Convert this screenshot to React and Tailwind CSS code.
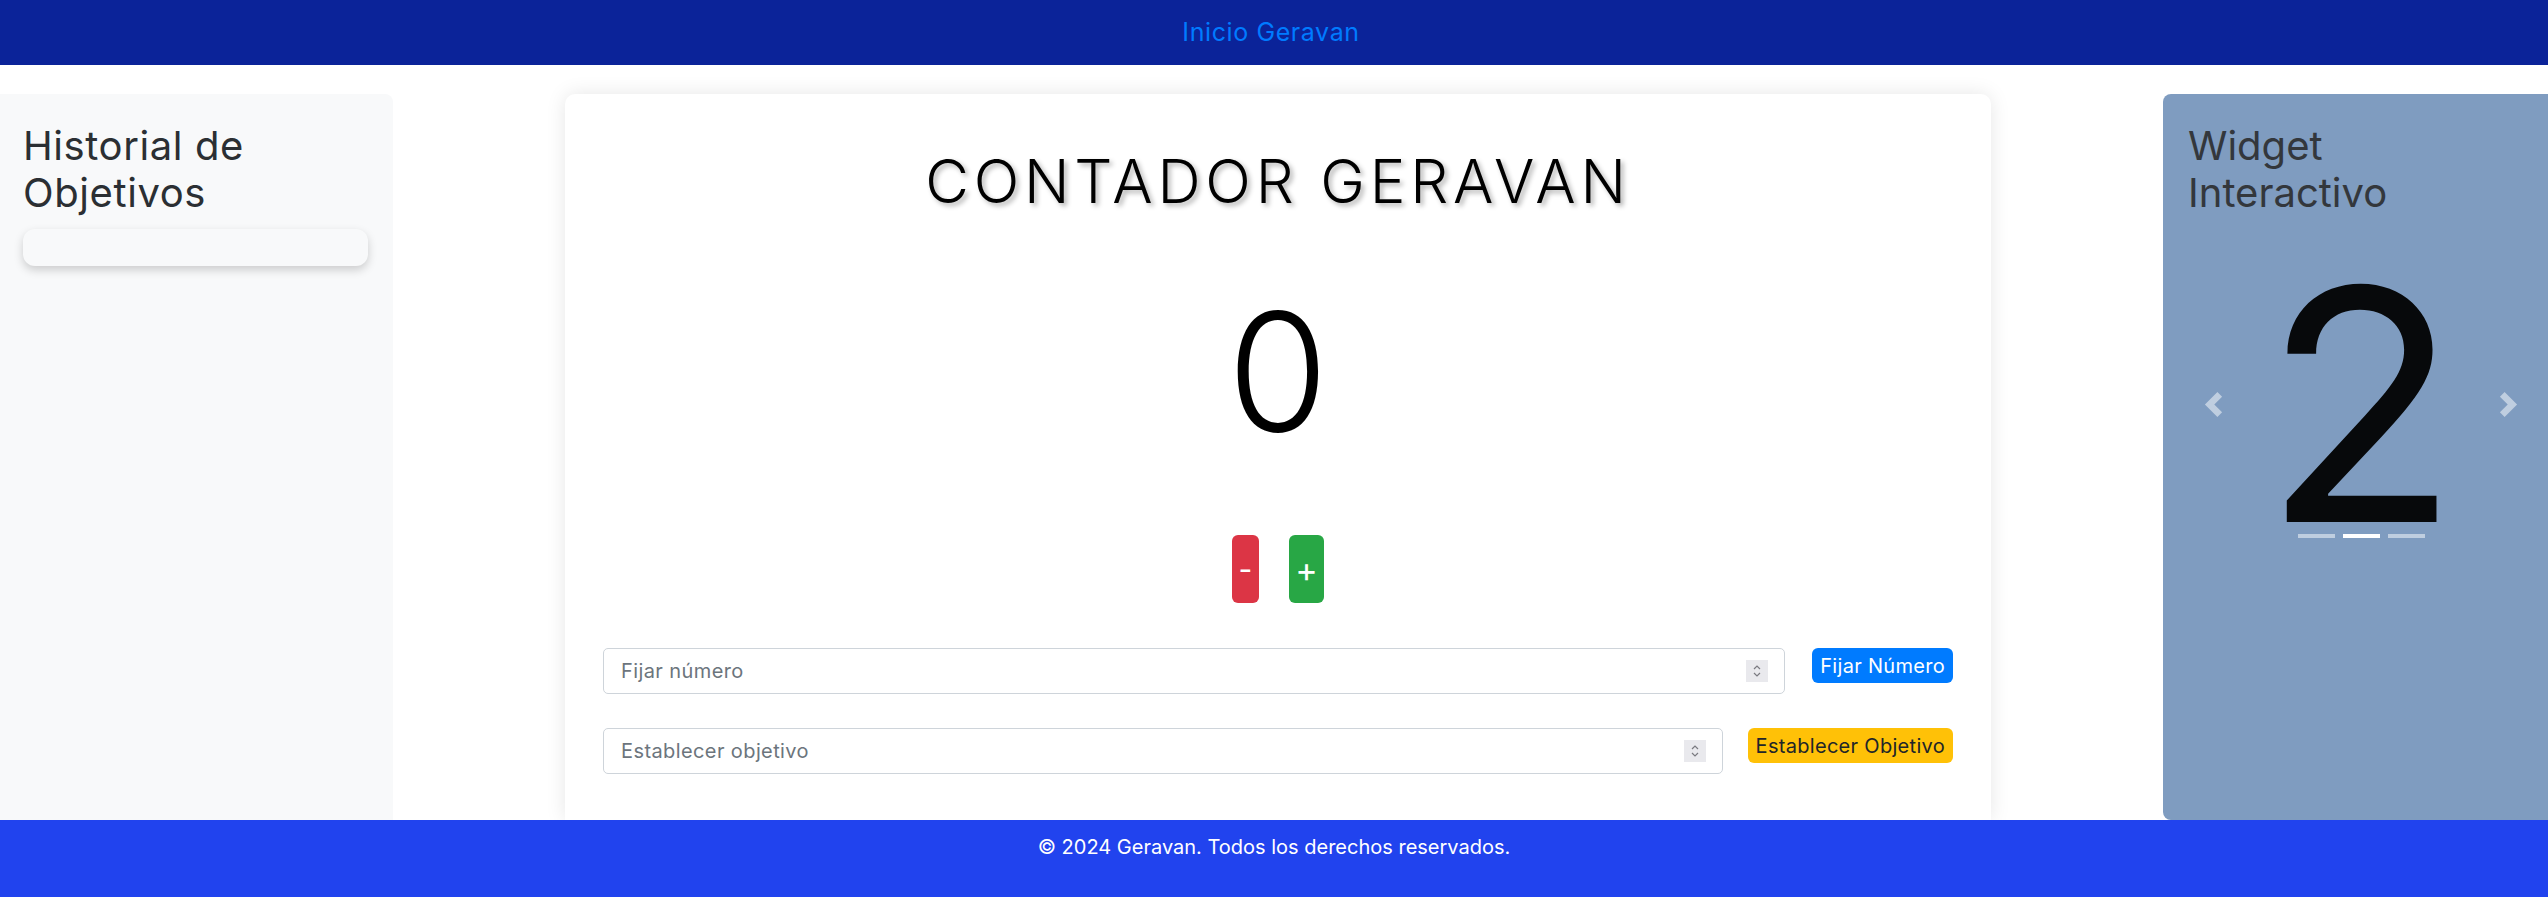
const font = "font-['Inter','Liberation_Sans',sans-serif]"

function Spinner() {
    return (
        <span className="flex h-[22px] w-[22px] flex-col items-center justify-center bg-[#e9e9ed]">
            <svg viewBox="0 0 10 14" className="h-[14px] w-[10px]" fill="none" stroke="#7a7a80" strokeWidth="1.2">
                <path d="M2 5 L5 2 L8 5" />
                <path d="M2 9 L5 12 L8 9" />
            </svg>
        </span>
    )
}

function NumberField({ placeholder }) {
    return (
        <div className="flex h-[46px] flex-1 items-center justify-between rounded-[5px] border border-[#ced4da] bg-white pl-[17px] pr-[16px]">
            <span className="text-[20px] tracking-[0.4px] text-[#6c757d]">{placeholder}</span>
            <Spinner />
        </div>
    )
}

function CarouselArrow({ flip }) {
    return (
        <svg viewBox="0 0 8 8" className={`h-[25px] w-[25px] ${flip ? 'rotate-180' : ''}`}>
            <path d="M5.25 0l-4 4 4 4 1.5-1.5L4.25 4l2.5-2.5L5.25 0z" fill="rgba(255,255,255,0.5)" />
        </svg>
    )
}

export default function App() {
    return (
        <div className={`${font} flex h-[897px] w-[2548px] flex-col overflow-hidden bg-white`}>
            {/* Navbar */}
            <header className="flex h-[65px] shrink-0 items-center justify-center bg-[#0b2399]">
                <a className="pr-[6px] text-[25px] tracking-[0.6px] text-[#007bff]">Inicio Geravan</a>
            </header>

            {/* Main */}
            <main className="flex flex-1 justify-between pt-[29px]">
                {/* Historial */}
                <aside className="w-[393px] rounded-tr-[8px] bg-[#f8f9fa] pl-[23px] pr-[25px] pt-[28px]">
                    <h4 className="text-[40px] leading-[47px] tracking-[0.6px] text-[#2b2f33]">Historial de Objetivos</h4>
                    <div className="mt-[13px] h-[37px] rounded-[12px] bg-[#f8f9fa] shadow-[0_4px_10px_rgba(0,0,0,0.18)]" />
                </aside>

                {/* Contador */}
                <section className="flex w-[1426px] flex-col items-center rounded-t-[10px] bg-white px-[38px] pt-[51px] shadow-[0_0_20px_rgba(0,0,0,0.1)]">
                    <h1 className="text-[60px] font-light leading-[72px] tracking-[4.8px] text-black [text-shadow:3px_3px_5px_rgba(0,0,0,0.3)]">
                        CONTADOR GERAVAN
                    </h1>
                    <div className="mt-[73px] text-[164px] font-light leading-none text-black">0</div>
                    <div className="mt-[81px] flex gap-[30px]">
                        <button className="flex h-[68px] w-[27px] items-center justify-center rounded-[6px] bg-[#dc3545] text-[30px] text-white">-</button>
                        <button className="flex h-[68px] w-[35px] items-center justify-center rounded-[6px] bg-[#28a745] text-[34px] text-white">+</button>
                    </div>
                    <div className="mt-[45px] flex w-full items-start gap-[27px]">
                        <NumberField placeholder="Fijar número" />
                        <button className="h-[35px] rounded-[6px] bg-[#007bff] px-[8px] text-[20px] tracking-[0.3px] text-white">Fijar Número</button>
                    </div>
                    <div className="mt-[34px] flex w-full items-start gap-[25px]">
                        <NumberField placeholder="Establecer objetivo" />
                        <button className="h-[35px] rounded-[6px] bg-[#ffc107] px-[8px] text-[20px] tracking-[0.3px] text-[#212529]">Establecer Objetivo</button>
                    </div>
                </section>

                {/* Widget */}
                <aside className="w-[385px] rounded-l-[8px] bg-[#7f9cc0] pl-[25px] pt-[28px]">
                    <h4 className="w-[340px] text-[40px] leading-[47px] text-[#33373c]">Widget Interactivo</h4>
                    <div className="relative mt-[27px] flex w-[346px] items-center justify-center">
                        <div className="text-[323px] leading-none text-[#07090b]">2</div>
                        <button className="absolute left-0 top-0 flex h-full w-[15%] items-center justify-center">
                            <CarouselArrow />
                        </button>
                        <button className="absolute right-0 top-0 flex h-full w-[15%] items-center justify-center">
                            <CarouselArrow flip />
                        </button>
                        <div className="absolute bottom-[28px] left-0 right-0 flex justify-center gap-[8px]">
                            <span className="h-[4px] w-[37px] bg-white/50" />
                            <span className="h-[4px] w-[37px] bg-white" />
                            <span className="h-[4px] w-[37px] bg-white/50" />
                        </div>
                    </div>
                </aside>
            </main>

            {/* Footer */}
            <footer className="flex h-[77px] shrink-0 justify-center bg-[#2143ee] pt-[12px]">
                <p className="text-[20px] text-white">© 2024 Geravan. Todos los derechos reservados.</p>
            </footer>
        </div>
    )
}
